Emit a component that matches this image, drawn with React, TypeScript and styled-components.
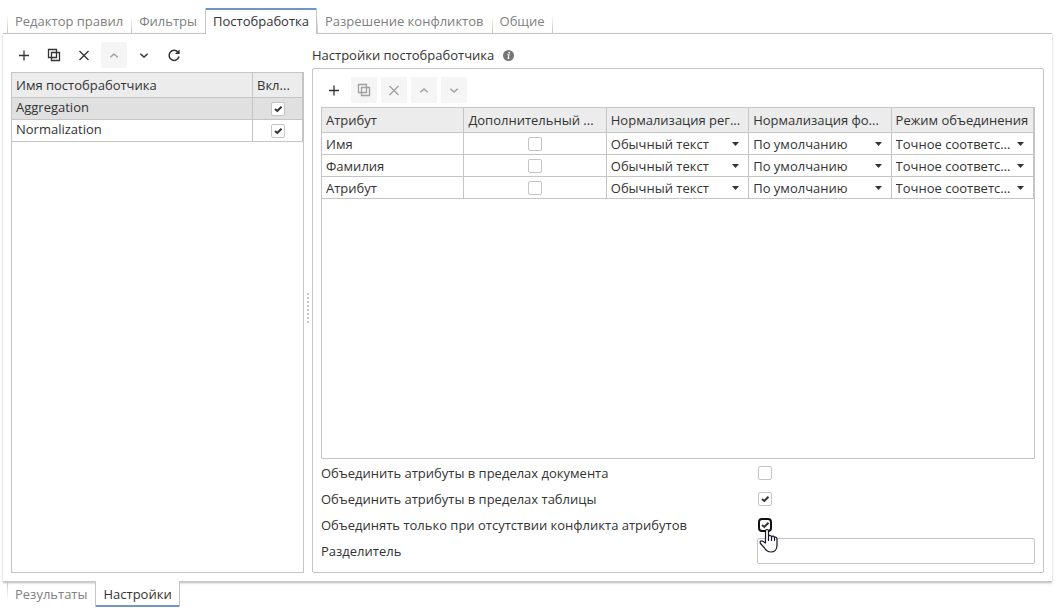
import React, { useId } from 'react';
import styled, { createGlobalStyle, css } from 'styled-components';

const line = '#c5c5c5';
const ink = '#333333';

const GlobalStyle = createGlobalStyle`
  *, *::before, *::after { box-sizing: border-box; }
  body {
    margin: 0;
    background: #ffffff;
    color: ${ink};
    font: 13px/18px "Open Sans", "Noto Sans", sans-serif;
  }
  button, input, select { font: inherit; color: inherit; }
`;

const Page = styled.main`
  display: flex;
  flex-direction: column;
  min-height: 100vh;
  padding: 8px 8px 5px 3px;
`;

const TabBar = styled.div`
  display: flex;
  height: 25px;
  padding-left: 4px;
  flex: none;
`;

const Tab = styled.button<{ $active?: boolean; $side: 'top' | 'bottom'; $last?: boolean }>`
  position: relative;
  border: 0;
  padding: ${p => (p.$side === 'top' ? '1px 8px 0' : '0 8px 1px')};
  background: none;
  color: #808080;
  white-space: nowrap;
  cursor: pointer;

  ${p => !p.$active && css`
    background: linear-gradient(to ${p.$side}, ${line}, transparent) left
      ${p.$side === 'top' ? 'bottom' : 'top'} / 1px 18px no-repeat;
  `}
  ${p => p.$last && css`
    background:
      linear-gradient(to ${p.$side}, ${line}, transparent) left bottom / 1px 18px no-repeat,
      linear-gradient(to ${p.$side}, ${line}, transparent) right bottom / 1px 18px no-repeat;
  `}
  ${p => p.$active && css`
    z-index: 1;
    color: ${ink};
    background: #ffffff;
    border: solid ${line};
    border-width: 0 1px;
    margin-${p.$side === 'top' ? 'bottom' : 'top'}: -1px;
    padding: ${p.$side === 'top' ? '0 7px 1px' : '0 7px'};
    box-shadow: inset 0 ${p.$side === 'top' ? '2px' : '-2px'} #6f97c4;
  `}
`;

const Panel = styled.section`
  flex: 1;
  display: grid;
  grid-template-columns: 293px 8px minmax(0, 1fr);
  padding: 8px;
  border: solid ${line};
  border-width: 1px 0;
  box-shadow: 0 1px 2px rgba(0, 0, 0, 0.28);
`;

const Column = styled.div`
  display: flex;
  flex-direction: column;
  min-width: 0;
`;

const Splitter = styled.div`
  display: flex;
  flex-direction: column;
  justify-content: center;
  align-items: center;
  gap: 2px;
  cursor: col-resize;
`;

const Dot = styled.span`
  width: 2px;
  height: 2px;
  background: ${line};
`;

const Toolbar = styled.div`
  display: flex;
  gap: 4px;
  margin-bottom: 4px;
`;

const ToolButton = styled.button`
  display: grid;
  place-items: center;
  width: 26px;
  height: 26px;
  padding: 0;
  border: 0;
  border-radius: 2px;
  background: none;
  cursor: pointer;
  &:disabled {
    background: #f5f5f5;
    color: #a0a0a0;
    cursor: default;
  }
`;

const GridBox = styled.div`
  flex: 1;
  border: 1px solid ${line};
`;

const Table = styled.table`
  width: 100%;
  table-layout: fixed;
  border-collapse: separate;
  border-spacing: 0;
`;

const HeadCell = styled.th<{ $width?: number }>`
  ${p => p.$width && css`width: ${p.$width}px;`}
  height: 25px;
  padding: 0 4px;
  border: solid ${line};
  border-width: 0 1px 1px 0;
  background: #ececec;
  font-weight: 400;
  text-align: left;
  overflow: hidden;
  white-space: nowrap;
  text-overflow: ellipsis;
`;

const Row = styled.tr<{ $selected?: boolean }>`
  background: ${p => (p.$selected ? '#e0e0e0' : '#ffffff')};
`;

const Cell = styled.td<{ $kind?: 'text' | 'raised' | 'control' }>`
  height: 22px;
  padding: ${p => (p.$kind === 'control' ? '0' : p.$kind === 'raised' ? '0 4px 3px' : '0 4px')};
  border: solid ${line};
  border-width: 0 1px 1px 0;
  line-height: 18px;
`;

const CheckBoxFrame = styled.span<{ $center?: boolean }>`
  position: relative;
  display: grid;
  width: 14px;
  height: 14px;
  ${p => p.$center && css`margin: 0 auto;`}
  & > * { grid-area: 1 / 1; }
`;

const CheckInput = styled.input<{ $focused?: boolean }>`
  appearance: none;
  width: 14px;
  height: 14px;
  margin: 0;
  border: 1px solid ${line};
  border-radius: 2px;
  background: #ffffff;
  ${p => p.$focused && css`border: 2px solid #101010; border-radius: 4px;`}
  & + svg { visibility: hidden; }
  &:checked + svg { visibility: visible; }
`;

const Tick = styled.svg`
  pointer-events: none;
`;

const Pointer = styled.svg`
  position: absolute;
  left: 1px;
  top: 10px;
  z-index: 2;
  pointer-events: none;
`;

const SelectFrame = styled.div`
  display: grid;
  align-items: center;
  & > * { grid-area: 1 / 1; }
`;

const SelectInput = styled.select`
  appearance: none;
  width: 100%;
  height: 21px;
  padding: 0 20px 0 4px;
  border: 0;
  background: none;
  overflow: hidden;
  white-space: nowrap;
  text-overflow: ellipsis;
`;

const Caret = styled.svg`
  justify-self: end;
  margin-right: 9px;
  pointer-events: none;
`;

const Title = styled.h2`
  display: flex;
  align-items: center;
  gap: 9px;
  height: 26px;
  margin: 0;
  font-size: 13px;
  font-weight: 400;
`;

const Settings = styled.div`
  flex: 1;
  display: flex;
  flex-direction: column;
  padding: 8px;
  border: 1px solid ${line};
  border-radius: 2px;
`;

const Form = styled.form`
  padding-top: 1px;
`;

const FormRow = styled.div`
  display: grid;
  grid-template-columns: 61% 1fr;
  align-items: center;
  height: 26px;
`;

const Field = styled.div<{ $indent?: boolean }>`
  display: grid;
  padding-left: ${p => (p.$indent ? '1px' : '0')};
`;

const TextInput = styled.input`
  width: 100%;
  height: 26px;
  padding: 0 4px;
  border: 1px solid ${line};
  border-radius: 2px;
  background: #ffffff;
`;

type IconName = 'add' | 'copy' | 'remove' | 'up' | 'down' | 'refresh';

const iconPaths: Record<IconName, React.ReactNode> = {
  add: <path d="M8 3.500v10M3 8.500h10" />,
  copy: <path d="M2.500 2.500h8v8h-8zM5.500 5.500h8v8h-8z" />,
  remove: <path d="M3.500 4l9 9M12.500 4l-9 9" />,
  up: <path d="M4.300 10.200L8 6.900L11.700 10.200" strokeWidth="1.500" />,
  down: <path d="M4.300 6.700L8 10L11.700 6.700" strokeWidth="1.500" />,
  refresh: (
    <>
      <path d="M12 5.200A5 5 0 1 0 13 9.500" strokeWidth="1.500" />
      <path d="M13.600 2.500V7H9z" fill="currentColor" stroke="none" />
    </>
  ),
};

const Icon = ({ name }: { name: IconName }) => (
  <svg width="16" height="16" viewBox="0 0 16 16" fill="none" stroke="currentColor" strokeWidth="1.3" aria-hidden="true">
    {iconPaths[name]}
  </svg>
);

const InfoIcon = () => (
  <svg width="11" height="11" viewBox="0 0 11 11" role="img" aria-label="Справка">
    <circle cx="5.5" cy="5.500" r="5.500" fill="#777777" />
    <circle cx="6.200" cy="2.700" r="0.900" fill="#ffffff" />
    <path d="M4.300 4.700H6L5.200 8.500H6.400" fill="none" stroke="#ffffff" strokeWidth="1.100" />
  </svg>
);

interface Tool { icon: IconName; label: string; disabled?: boolean }

const Tools = ({ items }: { items: Tool[] }) => (
  <Toolbar role="toolbar">
    {items.map(t => (
      <ToolButton key={t.icon} type="button" aria-label={t.label} title={t.label} disabled={t.disabled}>
        <Icon name={t.icon} />
      </ToolButton>
    ))}
  </Toolbar>
);

interface CheckBoxProps { id?: string; label?: string; checked?: boolean; focused?: boolean; center?: boolean }

const CheckBox = ({ id, label, checked, focused, center }: CheckBoxProps) => (
  <CheckBoxFrame $center={center}>
    <CheckInput id={id} type="checkbox" aria-label={label} defaultChecked={checked} $focused={focused} />
    <Tick width="14" height="14" viewBox="0 0 14 14" fill="none" stroke={ink} strokeWidth="2" aria-hidden="true">
      <path d="M4 7l2.300 2L10.500 4.700" />
    </Tick>
    {focused && (
      <Pointer width="20" height="26" viewBox="0 0 20 26" fill="#ffffff" stroke="#15152a" strokeWidth="1.200" strokeLinejoin="round" strokeLinecap="round" aria-hidden="true">
        <path d="M6.500 15V3.200C6.500 0.900 9.500 0.900 9.500 3.200V8.500C10 6.900 12.500 7.200 12.500 9C13 7.600 15.500 8 15.500 9.700C16 8.700 18 9 18 11V17.500C18 21.500 15.500 24 12 24C8.500 24 7 22.500 5.500 20L1.500 15.500C0.300 13.700 2.300 12.200 3.800 13.300Z" />
        <path d="M9.500 8.500V12.500M12.500 9V12.500M15.500 9.700V12.500" fill="none" />
      </Pointer>
    )}
  </CheckBoxFrame>
);

const Select = ({ label, value }: { label: string; value: string }) => (
  <SelectFrame>
    <SelectInput aria-label={label} defaultValue={value}>
      <option>{value}</option>
    </SelectInput>
    <Caret width="7" height="4" viewBox="0 0 7 4" aria-hidden="true">
      <path d="M0 0h7L3.500 4z" fill={ink} />
    </Caret>
  </SelectFrame>
);

const FlagRow = ({ label, checked, focused }: { label: string; checked?: boolean; focused?: boolean }) => {
  const id = useId();
  return (
    <FormRow>
      <label htmlFor={id}>{label}</label>
      <Field $indent><CheckBox id={id} checked={checked} focused={focused} /></Field>
    </FormRow>
  );
};

const Tabs = ({ side, items, active }: { side: 'top' | 'bottom'; items: string[]; active: string }) => (
  <TabBar role="tablist">
    {items.map((name, i) => (
      <Tab
        key={name}
        type="button"
        role="tab"
        aria-selected={name === active}
        $side={side}
        $active={name === active}
        $last={i === items.length - 1 && name !== active}
      >
        {name}
      </Tab>
    ))}
  </TabBar>
);

const processorTools: Tool[] = [
  { icon: 'add', label: 'Добавить' },
  { icon: 'copy', label: 'Копировать' },
  { icon: 'remove', label: 'Удалить' },
  { icon: 'up', label: 'Вверх', disabled: true },
  { icon: 'down', label: 'Вниз' },
  { icon: 'refresh', label: 'Обновить' },
];

const attributeTools: Tool[] = [
  { icon: 'add', label: 'Добавить' },
  { icon: 'copy', label: 'Копировать', disabled: true },
  { icon: 'remove', label: 'Удалить', disabled: true },
  { icon: 'up', label: 'Вверх', disabled: true },
  { icon: 'down', label: 'Вниз', disabled: true },
];

const processors = ['Aggregation', 'Normalization'];
const attributes = ['Имя', 'Фамилия', 'Атрибут'];

export default function App() {
  return (
    <>
      <GlobalStyle />
      <Page>
        <Tabs
          side="top"
          active="Постобработка"
          items={['Редактор правил', 'Фильтры', 'Постобработка', 'Разрешение конфликтов', 'Общие']}
        />
        <Panel>
          <Column>
            <Tools items={processorTools} />
            <GridBox>
              <Table>
                <thead>
                  <tr>
                    <HeadCell>Имя постобработчика</HeadCell>
                    <HeadCell $width={50}>Вкл...</HeadCell>
                  </tr>
                </thead>
                <tbody>
                  {processors.map((name, i) => (
                    <Row key={name} $selected={i === 0}>
                      <Cell $kind="raised">{name}</Cell>
                      <Cell $kind="control"><CheckBox center checked label={name} /></Cell>
                    </Row>
                  ))}
                </tbody>
              </Table>
            </GridBox>
          </Column>
          <Splitter role="separator" aria-orientation="vertical">
            {Array.from({ length: 8 }, (_, i) => <Dot key={i} />)}
          </Splitter>
          <Column>
            <Title>Настройки постобработчика <InfoIcon /></Title>
            <Settings>
              <Tools items={attributeTools} />
              <GridBox>
                <Table>
                  <thead>
                    <tr>
                      <HeadCell>Атрибут</HeadCell>
                      <HeadCell>Дополнительный ...</HeadCell>
                      <HeadCell>Нормализация рег...</HeadCell>
                      <HeadCell>Нормализация фо...</HeadCell>
                      <HeadCell>Режим объединения</HeadCell>
                    </tr>
                  </thead>
                  <tbody>
                    {attributes.map(name => (
                      <Row key={name}>
                        <Cell>{name}</Cell>
                        <Cell $kind="control"><CheckBox center label={`${name}: дополнительный`} /></Cell>
                        <Cell $kind="control"><Select label="Нормализация регистра" value="Обычный текст" /></Cell>
                        <Cell $kind="control"><Select label="Нормализация формата" value="По умолчанию" /></Cell>
                        <Cell $kind="control"><Select label="Режим объединения" value="Точное соответствие" /></Cell>
                      </Row>
                    ))}
                  </tbody>
                </Table>
              </GridBox>
              <Form>
                <FlagRow label="Объединить атрибуты в пределах документа" />
                <FlagRow label="Объединить атрибуты в пределах таблицы" checked />
                <FlagRow label="Объединять только при отсутствии конфликта атрибутов" checked focused />
                <FormRow>
                  <label htmlFor="separator">Разделитель</label>
                  <Field><TextInput id="separator" type="text" /></Field>
                </FormRow>
              </Form>
            </Settings>
          </Column>
        </Panel>
        <Tabs side="bottom" active="Настройки" items={['Результаты', 'Настройки']} />
      </Page>
    </>
  );
}
